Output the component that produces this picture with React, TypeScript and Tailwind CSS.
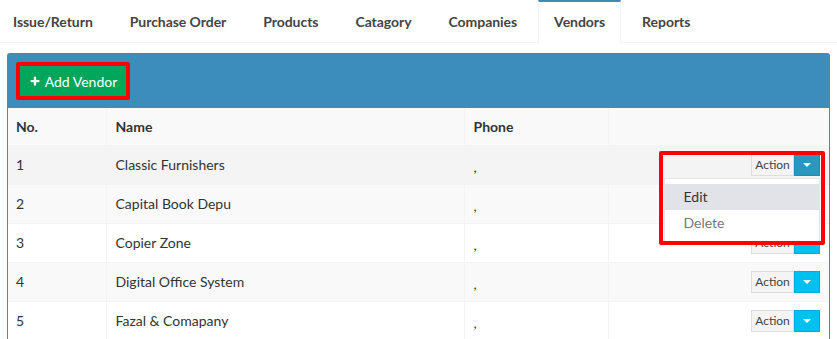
import { Plus } from "lucide-react";

const tabs = ["Issue/Return", "Purchase Order", "Products", "Catagory", "Companies", "Vendors", "Reports"];

const vendors = [
  { no: 1, name: "Classic Furnishers" },
  { no: 2, name: "Capital Book Depu" },
  { no: 3, name: "Copier Zone" },
  { no: 4, name: "Digital Office System" },
  { no: 5, name: "Fazal & Comapany" },
];

function Caret() {
  return <span className="block h-0 w-0 border-x-[4px] border-t-[4px] border-x-transparent border-t-white" />;
}

function ActionGroup({ open }: { open?: boolean }) {
  return (
    <div className="flex h-[22px] text-[12px] leading-none">
      <button className="flex w-[43px] items-center justify-center border border-[#ddd] bg-[#f4f4f4] text-[#444]">
        Action
      </button>
      <button
        className={
          open
            ? "flex w-[26px] items-center justify-center border border-[#1f8db0] bg-[#2a97bd]"
            : "flex w-[26px] items-center justify-center border border-[#00acd6] bg-[#00c0ef]"
        }
      >
        <Caret />
      </button>
    </div>
  );
}

export default function App() {
  return (
    <div className="h-[339px] w-[837px] overflow-hidden bg-white text-[#333]" style={{ fontFamily: "Lato, 'Liberation Sans', sans-serif" }}>
      {/* Tabs */}
      <ul className="ml-[-3px] flex h-[43px] border-b border-[#f4f4f4]">
        {tabs.map((t) => (
          <li
            key={t}
            className={
              t === "Vendors"
                ? "mr-[5px] -mb-px flex h-[43px] items-center border-x border-t-[2px] border-x-[#f4f4f4] border-t-[#3c8dbc] bg-white px-[15px] pb-[3px] text-[14px] font-bold tracking-[-0.05px] text-[#444]"
                : "mr-[5px] flex h-[42px] items-center border-x border-transparent px-[15px] pt-[1px] text-[14px] font-bold tracking-[-0.05px] text-[#444]"
            }
          >
            {t}
          </li>
        ))}
      </ul>

      {/* Box */}
      <div className="mx-[7px] mt-[10px] rounded-t-[3px] border-x border-t border-[#3c8dbc]">
        <div className="h-[54px] bg-[#3c8dbc] pl-[8px] pt-[8px]">
          <div className="inline-flex rounded-[2px] border-[4px] border-[#ff0000]">
            <button className="flex h-[30px] w-[106px] items-center justify-center gap-[4px] bg-[#00a65a] text-[14px] text-white">
              <Plus size={12} strokeWidth={4.5} />
              Add Vendor
            </button>
          </div>
        </div>

        <table className="w-full border-collapse text-[14px]">
          <thead>
            <tr className="h-[37px] bg-[#f9f9f9]">
              <th className="w-[98px] border-r border-[#f4f4f4] px-[8px] text-left font-bold">No.</th>
              <th className="w-[358px] border-r border-[#f4f4f4] px-[9px] text-left font-bold">Name</th>
              <th className="w-[144px] border-r border-[#f4f4f4] px-[9px] text-left font-bold">Phone</th>
              <th />
            </tr>
          </thead>
          <tbody>
            {vendors.map((v, i) => (
              <tr
                key={v.no}
                className={
                  i === 0
                    ? "h-[39px] border-t border-[#f4f4f4] bg-[#f4f4f4]"
                    : i % 2 === 1
                      ? "h-[39px] border-t border-[#f4f4f4] bg-[#f9f9f9]"
                      : "h-[39px] border-t border-[#f4f4f4] bg-white"
                }
              >
                <td className="border-r border-[#f4f4f4] px-[8px]">{v.no}</td>
                <td className="border-r border-[#f4f4f4] px-[9px]">{v.name}</td>
                <td className="border-r border-[#f4f4f4] px-[9px] pt-[3px]">,</td>
                <td className="relative pr-[9px]">
                  <div className="flex justify-end">
                    <ActionGroup open={i === 0} />
                  </div>
                  {i === 0 && (
                    <>
                      <div className="absolute left-[55px] top-[32px] z-10 w-[156px] border border-[#e5e5e5] bg-white py-[5px] text-[14px]">
                        <div className="flex h-[26px] items-center bg-[#e1e3e9] pl-[19px] text-[#333]">Edit</div>
                        <div className="flex h-[26px] items-center pl-[19px] text-[#777]">Delete</div>
                      </div>
                      <div className="pointer-events-none absolute left-[50px] top-[5px] z-20 h-[94px] w-[166px] rounded-[2px] border-[4px] border-[#ff0000]" />
                    </>
                  )}
                </td>
              </tr>
            ))}
          </tbody>
        </table>
      </div>
    </div>
  );
}
